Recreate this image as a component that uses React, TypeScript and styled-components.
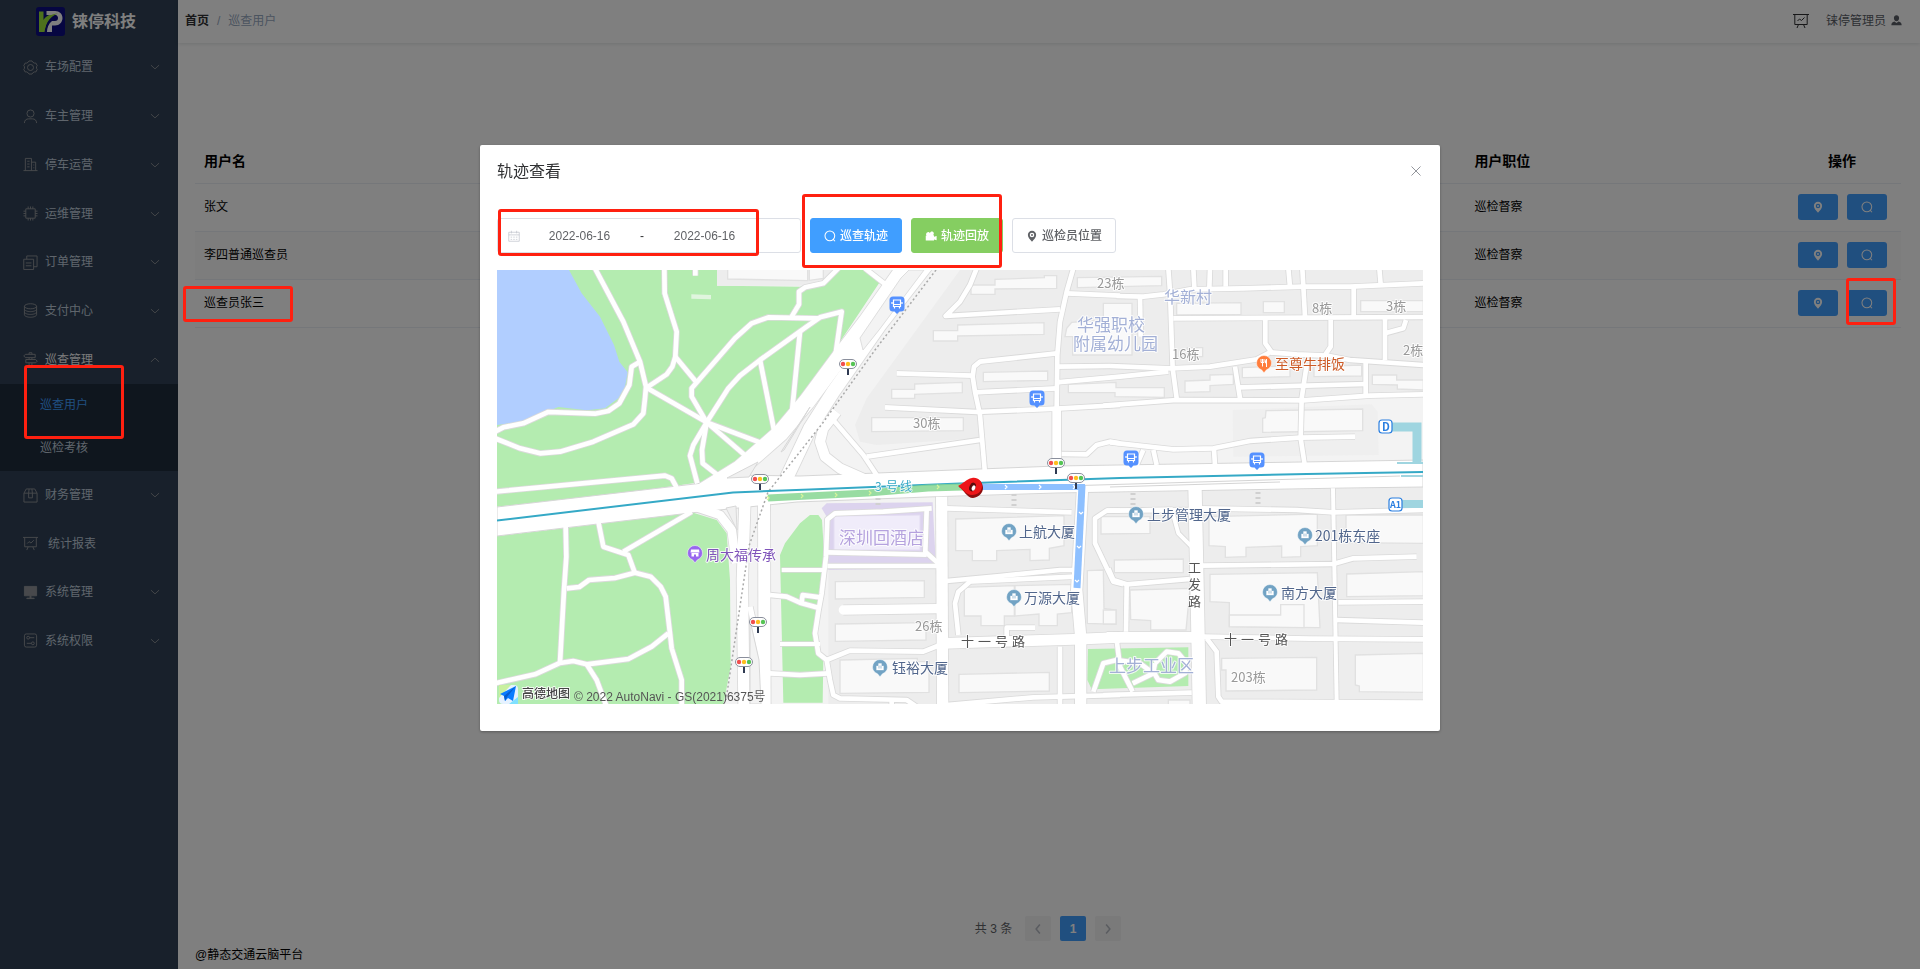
import React from 'react';
import styled, { createGlobalStyle } from 'styled-components';

const GlobalStyle = createGlobalStyle`
  *, *::before, *::after { box-sizing: border-box; }
  body {
    margin: 0;
    background: #ffffff;
    color: #000000;
    font-family: "Liberation Sans", "Noto Sans CJK SC", sans-serif;
    font-size: 12px;
    line-height: 18px;
  }
  button, input { font: inherit; }
  a { color: inherit; text-decoration: none; }
`;

/* ---------- icons ---------- */

const ICONS: Record<string, React.ReactNode> = {
  gear: (
    <>
      <path d="M5.6 2.3 6.4 1h3.2l.8 1.3 1.7 1 1.5-.1 1.6 2.8-.8 1.2v1.6l.8 1.2-1.6 2.8-1.5-.1-1.7 1L9.600 15H6.400l-.8-1.300-1.700-1-1.500.1L.8 10l.8-1.200V7.200L.8 6l1.600-2.800 1.500.1z" />
      <circle cx="8" cy="8" r="3.200" />
    </>
  ),
  user: (
    <>
      <circle cx="8" cy="4.800" r="3.800" />
      <path d="M1.500 15c0-3 2-4.500 4.500-4.500h4c2.500 0 4.500 1.500 4.500 4.500" />
    </>
  ),
  building: <path d="M2.500 14.500v-13h6.500v13M9 5.500h4.500v9M.5 14.500h15M4.500 4.500h2.500M4.500 7.500h2.500M4.500 10.500h2.500M11 8.500h1M11 11.500h1" />,
  chip: <path d="M3 3h10v10H3zM5.500 3V.5M8 3V.5M10.500 3V.5M5.500 15.500V13M8 15.500V13M10.500 15.500V13M3 5.500H.5M3 8H.5M3 10.500H.5M15.500 5.500H13M15.500 8H13M15.500 10.500H13" />,
  docs: <path d="M.8 4.500h10.500v11H.8zM4 4.500V1h11v11.500h-3.500M3 8.500h6M3 11.500h6" />,
  coins: (
    <>
      <ellipse cx="8" cy="3.500" rx="6.500" ry="2.700" />
      <path d="M1.500 3.500v9c0 1.500 3 2.700 6.500 2.700s6.500-1.200 6.500-2.700v-9M1.500 6.500C1.500 8 4.500 9.200 8 9.200s6.500-1.200 6.500-2.700M1.500 9.500c0 1.500 3 2.700 6.500 2.700s6.500-1.200 6.500-2.700" />
    </>
  ),
  signpost: <path d="M6.500 2.500V.8h3v1.700M2.500 2.500h10.500v3.500H2.500L.8 4.200zM3 8h10.500l1.700 1.800-1.700 1.700H3zM6.500 6v2M9.500 6v2M6.500 11.500v3M9.500 11.500v3M4 15h8" />,
  suitcase: <path d="M1 5.500h14v9.500H1zM1 5.500 3.500 1h9L15 5.500M6 5.500v5h4v-5M6.500 1 6 5.500M9.500 1l.5 4.500" />,
  board: <path d="M0 1.500h16M1.800 1.500v10h12.400v-10M5.500 11.500 4 15M10.500 11.500 12 15M4.500 8l2-2 2 1.500 3-3" />,
  monitor: <path fill="currentColor" d="M1.500 1.500h13v10h-13zM7.500 11.500h1v2.500h-1zM4 14h8v.5H4z" />,
  sliders: (
    <>
      <rect x="1.500" y="1" width="13" height="14" rx="2" />
      <circle cx="5.500" cy="5" r="1.500" />
      <circle cx="10.500" cy="11" r="1.500" />
      <path d="M7 5h5M4 11h5" />
    </>
  ),
  down: <path d="m1.500 5 6.500 6 6.500-6" />,
  up: <path d="m1.500 11 6.500-6 6.500 6" />,
  left: <path d="m10.500 2-5 6 5 6" />,
  right: <path d="m5.500 2 5 6-5 6" />,
  close: <path d="m2 2 12 12M14 2 2 14" />,
  search: (
    <>
      <circle cx="7.800" cy="7.800" r="6.500" />
      <path d="m12 12.200 2.700 2.800" />
    </>
  ),
  calendar: <path d="M1 3h14v12H1zM1 6.500h14M4.500 1v3.500M11.500 1v3.500M3.500 9.500h2M7 9.500h2M10.500 9.500h2M3.500 12.500h2M7 12.500h2M10.500 12.500h2" />,
  pin: <path fill="currentColor" stroke="none" fillRule="evenodd" d="M8 1a5.500 5.500 0 0 0-5.500 5.500c0 3.200 2.800 6 5.500 9 2.700-3 5.500-5.800 5.500-9A5.500 5.500 0 0 0 8 1zm0 2.500a3 3 0 1 1 0 6 3 3 0 0 1 0-6zm0 1.800a1.300 1.300 0 1 0 0 2.600 1.300 1.300 0 0 0 0-2.600z" />,
  camera: <path fill="currentColor" stroke="none" d="M3.500 3a2.300 2.300 0 0 1 3 1.200C7 2.200 8.500 1.500 10 2c2.300.8 2.300 3.800.7 5H12v2l3.500-1v5.500L12 12.500V14H1V7.500h1C.8 6 1.500 3.500 3.500 3z" />,
  person: <path fill="currentColor" stroke="none" d="M8 .5c2.300 0 3.800 1.700 3.800 4S10.300 9.200 8 9.200 4.200 6.800 4.200 4.500 5.700.5 8 .5zM5 9.500l3 2 3-2c3 .6 4.500 2.200 4.500 5.500H.5C.500 11.700 2 10.100 5 9.500z" />,
};

const Svg = styled.svg`
  flex: none;
  display: block;
  fill: none;
  stroke: currentColor;
`;

const Icon = ({ name, size = 12, weight = 1 }: { name: string; size?: number; weight?: number }) => (
  <Svg width={size} height={size} viewBox="0 0 16 16" strokeWidth={weight} aria-hidden="true">
    {ICONS[name]}
  </Svg>
);

/* ---------- page shell ---------- */

const Page = styled.div`
  position: relative;
  display: flex;
  min-height: 100vh;
`;

const Sidebar = styled.aside`
  flex: none;
  width: 178px;
  background: #304156;
  color: #bfcbd9;
`;

const Brand = styled.div`
  display: flex;
  align-items: center;
  gap: 7px;
  height: 43px;
  padding-left: 36px;
  color: #ffffff;
  font-size: 16px;
  font-weight: 700;
`;

const MenuGroup = styled.div<{ $height: number }>`
  display: flex;
  flex-direction: column;
  min-height: ${(p) => p.$height}px;
`;

const MenuItem = styled.a<{ $wide?: boolean; $open?: boolean }>`
  flex: 1;
  display: flex;
  align-items: center;
  gap: ${(p) => (p.$wide ? 10 : 7)}px;
  padding: 0 18px 0 23px;
  color: ${(p) => (p.$open ? '#f4f4f5' : '#bfcbd9')};
  > svg { color: #909399; }
  > span { flex: 1; }
`;

const SubMenu = styled(MenuGroup)`
  background: #1f2d3d;
`;

const SubItem = styled.a<{ $active?: boolean }>`
  flex: 1;
  display: flex;
  align-items: center;
  padding: 0 0 2px 40px;
  color: ${(p) => (p.$active ? '#409eff' : '#bfcbd9')};
`;

const Main = styled.div`
  flex: 1;
  min-width: 0;
  display: flex;
  flex-direction: column;
`;

const TopBar = styled.header`
  display: flex;
  align-items: center;
  justify-content: space-between;
  height: 43px;
  padding: 0 18px 2px 7px;
  box-shadow: 0 1px 4px rgba(0, 21, 41, 0.12);
`;

const Breadcrumb = styled.nav`
  display: flex;
  gap: 8px;
  color: #97a8be;
  a { color: #303133; font-weight: 700; }
`;

const TopTools = styled.div`
  display: flex;
  align-items: center;
  gap: 17px;
  color: #303133;
`;

const UserName = styled.a`
  display: flex;
  align-items: center;
  gap: 5px;
  color: #5a5e66;
`;

const Content = styled.main`
  flex: 1;
  display: flex;
  flex-direction: column;
  padding: 92px 19px 5px 17px;
`;

const Table = styled.table`
  width: 100%;
  table-layout: fixed;
  border-collapse: collapse;
  th, td {
    height: 48px;
    padding: 0 9px;
    text-align: left;
    border-bottom: 1px solid #ebeef5;
  }
  th { padding-top: 5px; font-size: 14px; font-weight: 700; }
  th:last-child { text-align: center; }
  td:last-child { padding: 0; }
  tbody tr:nth-child(2) { background: #fafafa; }
`;

const ActionCol = styled.col`
  width: 118px;
`;

const Actions = styled.div`
  display: flex;
  justify-content: center;
  gap: 9px;
`;

const ActionButton = styled.button`
  display: grid;
  place-items: center;
  width: 40px;
  height: 26px;
  padding: 0;
  border: 0;
  border-radius: 3px;
  background: #409eff;
  color: #ffffff;
`;

const Pager = styled.nav`
  display: flex;
  justify-content: center;
  align-items: center;
  gap: 9px;
  margin-top: auto;
  color: #606266;
  > span { padding-right: 4px; }
`;

const PageButton = styled.button<{ $active?: boolean }>`
  display: grid;
  place-items: center;
  width: 26px;
  height: 25px;
  padding: 0;
  border: 0;
  border-radius: 2px;
  font-weight: 700;
  background: ${(p) => (p.$active ? '#409eff' : '#f4f4f5')};
  color: ${(p) => (p.$active ? '#ffffff' : '#b4b8c0')};
`;

const Footer = styled.footer`
  padding-top: 5px;
`;

/* ---------- dialog ---------- */

const Overlay = styled.div`
  position: fixed;
  inset: 0;
  z-index: 10;
  padding-top: 145px;
  background: rgba(0, 0, 0, 0.5);
`;

const Dialog = styled.section`
  position: relative;
  width: 50%;
  margin: 0 auto;
  padding: 0 17px 27px;
  border-radius: 2px;
  background: #ffffff;
  box-shadow: 0 1px 3px rgba(0, 0, 0, 0.3);
`;

const DialogHead = styled.header`
  display: flex;
  align-items: center;
  justify-content: space-between;
  height: 73px;
  padding-bottom: 20px;
  h2 { margin: 0; font-size: 16px; font-weight: 400; color: #303133; }
`;

const CloseButton = styled.button`
  padding: 0 1px 2px 0;
  border: 0;
  background: none;
  color: #909399;
`;

const Toolbar = styled.div`
  display: flex;
  gap: 9px;
  margin-bottom: 17px;
`;

const DateRange = styled.div`
  display: flex;
  align-items: center;
  width: 304px;
  height: 35px;
  padding-left: 10px;
  border: 1px solid #dcdfe6;
  border-radius: 3px;
  color: #c0c4cc;
  > svg { margin-right: 3px; }
  > span { width: 12px; text-align: center; color: #303133; }
`;

const DateInput = styled.input`
  width: 113px;
  padding: 0;
  border: 0;
  outline: 0;
  background: none;
  color: #606266;
  text-align: center;
`;

const TONES = {
  primary: ['#409eff', '#409eff', '#ffffff'],
  success: ['#85ce61', '#85ce61', '#ffffff'],
  plain: ['#ffffff', '#dcdfe6', '#606266'],
};

const ToolButton = styled.button<{ $tone: keyof typeof TONES }>`
  display: flex;
  align-items: center;
  gap: 4px;
  height: 35px;
  padding: 0 13px;
  border-radius: 3px;
  background: ${(p) => TONES[p.$tone][0]};
  border: 1px solid ${(p) => TONES[p.$tone][1]};
  color: ${(p) => TONES[p.$tone][2]};
  font-weight: 500;
`;

const Mark = styled.div<{ $top: number; $left?: number; $right?: number; $w: number; $h: number }>`
  position: absolute;
  z-index: 20;
  top: ${(p) => p.$top}px;
  ${(p) => (p.$right === undefined ? `left: ${p.$left}px;` : `right: ${p.$right}px;`)}
  width: ${(p) => p.$w}px;
  height: ${(p) => p.$h}px;
  border: 3px solid #ff2010;
  border-radius: 3px;
  pointer-events: none;
`;

/* ---------- map ---------- */

const MapSvg = styled.svg`
  display: block;
  width: 100%;
  height: 434px;
  background: #f3f3f3;
  text { font-family: "Noto Sans CJK SC", sans-serif; }
  .credit { font-family: "Liberation Sans", "Noto Sans CJK SC", sans-serif; }
`;

type Shape = [points: string, fill?: string];
type Road = [points: string, width?: number];
interface Tile {
  x: number;
  y: number;
  areas: Shape[];
  buildings: string[];
  roads: Road[];
}

const BLOCK = '#ededed';
const GREEN = '#b4ecb0';

/* Six tiles, each drawn at three units to the pixel. */
const TILES: Tile[] = [
  {
    x: -7, y: -5,
    areas: [
      ['21,15 681,15 681,62 930,65 1010,50 1040,15 1120,15 1170,50 1040,245 1020,290 930,405 850,515 770,580 640,650 350,692 21,725', GREEN],
      ['21,15 237,15 275,85 330,155 372,240 388,290 413,322 405,365 385,400 345,430 290,436 205,426 175,438 100,470 21,480', '#b1ceff'],
      ['681,15 1030,15 1000,45 930,62 681,62', BLOCK],
      ['604,88 663,90 663,103 604,101', '#e0f5de'],
    ],
    buildings: ['713,0 953,0 953,47 713,42', '958,10 1000,10 1000,40 958,46'],
    roads: [
      ['315,10 400,170 450,290 468,365 465,400 460,445 430,478 310,530 210,560 150,565 90,550 15,520'],
      ['450,290 425,305 418,360 388,415 355,438 315,446 175,441 100,475 40,487 15,500'],
      ['523,10 524,85 560,200 556,275 547,305 530,328 470,368'],
      ['556,275 618,350'],
      ['470,368 650,472 830,540'],
      ['650,472 770,575'],
      ['650,472 605,395 605,370 735,220 785,175 835,157 985,160'],
      ['650,472 715,370 750,332 810,285 950,185 990,157 1055,140 1035,280 1015,310'],
      ['905,155 927,118 927,80 945,67 1000,55 1045,10'],
      ['930,200 905,450'],
      ['810,285 855,510'],
      ['650,472 610,540 600,572 622,655'],
      ['650,472 636,555 638,595 680,628'],
      ['15,680 525,632 545,640 560,668'],
      ['616,10 616,32'],
    ],
  },
  {
    x: 303, y: -5,
    areas: [
      ['480,15 960,15 960,420 780,430 540,440 540,520 230,540 180,530 165,480 200,400', BLOCK],
    ],
    buildings: [
      '513,60 585,60 585,43 733,38 733,32 770,32 770,70 585,72 585,88 513,88',
      '400,197 473,197 473,180 732,173 732,208 473,213 473,228 400,228',
      '550,322 743,318 743,346 550,350',
      '275,373 344,373 344,357 487,352 487,383 344,388 344,400 275,400',
      '215,458 490,458 490,497 215,500',
      '832,38 1085,34 1085,62 832,68',
      '910,115 996,115 996,270 818,270 818,215 795,215 800,190 815,172 910,165',
      '805,358 948,352 948,368 1093,368 1093,397 945,395 945,383 805,383',
    ],
    roads: [
      ['530,10 510,60 480,110 437,153 780,133'],
      ['820,10 800,80 780,170 772,270 770,430'],
      ['770,430 770,620', 26],
      ['800,85 960,92'],
      ['770,265 540,290 522,305 518,335 525,380 540,450 555,625'],
      ['290,325 518,332'],
      ['525,382 770,370'],
      ['255,427 530,441 770,431 960,420'],
      ['770,305 930,303'],
      ['770,352 960,335 1105,320'],
      ['200,575 540,525'],
      ['100,465 190,570 230,630'],
      ['110,440 70,490 60,530 75,575 120,610 200,645', 30],
      ['785,567 860,568 890,540 930,530 960,535'],
      ['195,10 265,65'],
      ['-310,690 -180,610 -60,505 20,410 120,275 200,170 320,0', 50],
      ['-60,680 30,490 100,380 240,180 380,0', 40],
      ['145,290 165,240', 46],
    ],
  },
  {
    x: 613, y: -5,
    areas: [
      ['0,15 940,15 940,390 200,408 0,420', BLOCK],
      ['368,435 785,418 803,440 806,570 370,575', '#efefef'],
    ],
    buildings: [
      '200,115 393,113 393,148 200,150',
      '460,110 523,110 523,143 460,143',
      '752,107 940,107 940,140 752,140',
      '225,348 300,345 300,330 370,328 370,358 300,362 300,380 225,382',
      '397,308 540,302 540,335 397,338',
      '612,305 755,300 755,333 612,335',
      '787,330 860,330 860,345 940,345 940,375 862,372 862,360 787,358',
      '468,437 758,432 758,497 458,502 458,460 466,458',
      '232,248 278,248 278,275 232,275',
    ],
    roads: [
      ['175,10 180,80 188,310 200,400'],
      ['20,93 100,95 160,88 240,73 400,70 580,65 720,65 940,55'],
      ['250,10 253,68'], ['300,10 298,70'], ['347,10 347,65'],
      ['535,10 540,65'], ['577,10 585,155'], ['808,10 812,58'], ['731,65 731,155'],
      ['190,160 940,156'],
      ['90,95 92,215'],
      ['0,303 180,310 300,305 440,283 480,262 560,268 650,272 720,285 940,300'],
      ['466,165 466,235 485,262'], ['662,165 662,245 645,270'],
      ['825,160 825,285'], ['825,205 880,190 888,165'],
      ['375,305 390,400'],
      ['590,300 575,400 572,520 585,605'],
      ['767,290 767,390'],
      ['390,367 770,357'],
      ['-20,422 200,405 580,406 780,392 940,388'],
      ['0,532 190,553 310,550 420,528 570,518 735,515'],
      ['130,555 140,600'], ['100,555 80,600'], ['312,555 315,600'],
    ],
  },
  {
    x: -7, y: 210,
    areas: [
      ['21,168 230,143 570,100 600,95 680,120 710,160 720,300 722,560 700,675 21,675', GREEN],
      ['170,115 280,98 280,104 200,114', GREEN],
    ],
    buildings: [],
    roads: [
      ['227,140 229,230 222,330 210,548'],
      ['325,125 340,200 415,225 435,280'],
      ['605,95 400,215'],
      ['230,325 268,321 297,300 375,294 435,278 482,290 512,320 527,350 540,460 545,505 575,600 575,680'],
      ['535,460 485,500 415,537 290,553 250,543 210,549 135,583 15,610'],
      ['290,553 320,600 350,680'],
      ['600,75 690,105 725,150 738,250', 26],
      ['765,60 757,300 762,680', 34],
      ['822,60 824,680', 36],
      ['780,380 820,560', 16],
    ],
  },
  {
    x: 303, y: 210,
    areas: [
      ['-60,225 -45,190 0,130 30,105 55,105 66,120 75,265 55,380 45,470 70,540 68,668 -50,668', GREEN],
      ['85,270 410,262 410,675 85,675', BLOCK],
      ['65,85 80,70 398,67 408,265 85,270 80,110', '#dcd3ee'],
      ['445,52 960,35 960,675 445,675', BLOCK],
    ],
    buildings: [
      '467,117 792,107 792,197 748,205 748,240 690,242 690,208 590,212 590,242 517,242 517,212 467,212',
      '493,322 643,317 643,408 613,408 613,437 543,437 543,408 493,408',
      '645,317 815,313 815,398 772,402 772,437 717,437 717,402 645,408',
      '477,583 748,577 748,633 477,638',
      '106,305 373,302 373,352 106,357',
      '106,432 378,428 378,480 106,484',
      '120,540 352,535 352,545 387,545 387,637 120,640',
      '903,110 1050,110 1050,160 903,162',
      '862,272 910,270 912,385 948,390 948,433 862,430',
      '943,240 1150,237 1150,278 943,278',
    ],
    roads: [
      ['395,85 250,95 105,100 82,118 78,230 65,340 55,395 45,460 55,520 80,540 90,600 100,645 120,655 320,660 350,680'],
      ['380,90 376,215 420,255'], ['82,217 380,224'], ['82,258 420,258'],
      ['-55,270 75,270', 12], ['-90,345 -40,350 0,368 60,385'], ['5,365 8,345 60,352'],
      ['-60,492 60,492', 12], ['-90,580 0,585 85,580'],
      ['130,390 410,386', 28],
      ['80,540 150,512 370,515 420,495'],
      ['440,85 815,97'],
      ['440,303 600,288 780,270 825,270'], ['500,305 825,290'],
      ['510,305 475,335 465,370 475,465'],
      ['620,475 620,443 705,443'],
      ['780,500 780,680'], ['440,675 700,652 960,645'], ['275,655 275,680'],
      ['960,92 920,92 885,115 885,190 940,305 970,313'],
      ['425,50 428,680', 34],
      ['848,20 830,330 842,470 842,680', 34],
      ['430,490 820,478 960,472', 32],
    ],
  },
  {
    x: 613, y: 210,
    areas: [
      ['0,38 940,22 940,675 0,675', BLOCK],
      ['-66,507 235,502 235,618 -55,628 -68,600', GREEN],
    ],
    buildings: [
      '60,330 240,325 228,450 122,450 122,422 62,418',
      '-20,390 18,390 18,432 -20,432',
      '297,110 622,102 622,197 572,200 572,230 515,232 515,198 408,202 408,230 346,232 346,200 297,197',
      '708,105 940,105 940,190 708,188',
      '300,283 622,278 630,443 358,440 358,368 300,365',
      '358,405 512,405 512,374 582,374 582,443 358,440',
      '710,282 940,275 940,347 710,350',
      '335,535 620,532 620,630 348,633 348,570 335,570',
      '736,525 940,520 940,637 748,635 748,618 736,615',
      '175,660 240,660 240,680 175,680',
    ],
    roads: [
      ['0,92 185,88 205,160 245,200', 12],
      ['-10,92 240,90'],
      ['275,85 560,90 670,97 940,90'],
      ['-5,265 10,300 50,313 240,297'],
      ['50,318 48,455'],
      ['275,257 670,252 730,235 920,230'],
      ['685,367 940,365'], ['680,420 940,428'],
      ['290,475 320,515 325,650 335,665 940,668'],
      ['-50,635 -20,550 20,540'], ['20,480 30,560 68,635'], ['68,610 130,580 90,550 20,540'],
      ['135,550 170,515 205,520 230,550 225,580 180,605 145,600 130,575 135,550'],
      ['-20,645 245,638'],
      ['669,25 680,665', 12],
      ['280,470 600,476 940,478'],
      ['-10,472 260,472', 32],
      ['255,25 262,360 268,680', 40],
    ],
  },
];

const LIGHTS = [[263, 209], [351, 94], [559, 193], [579, 208], [261, 352], [247, 392]];
const BUSES = [[400, 34], [540, 128], [634, 188], [760, 190]];
const TOWERS = [[512, 261], [517, 327], [383, 397], [639, 244], [808, 265], [773, 322]];

type LabelSpec = [text: string, x: number, y: number, size: number, color: string];
const NAVY = '#51668c';
const GREY = '#999999';
const LILAC = '#a3b0d6';
const LABELS: LabelSpec[] = [
  ['周大福传承', 209, 290, 14, '#7f53ba'],
  ['上航大厦', 522, 267, 14, NAVY],
  ['万源大厦', 527, 333, 14, NAVY],
  ['钰裕大厦', 395, 403, 14, NAVY],
  ['上步管理大厦', 650, 250, 14, NAVY],
  ['201栋东座', 818, 271, 14, NAVY],
  ['南方大厦', 784, 328, 14, NAVY],
  ['至尊牛排饭', 778, 99, 14, '#cc5a26'],
  ['30栋', 416, 158, 13, GREY],
  ['26栋', 418, 361, 13, GREY],
  ['23栋', 600, 18, 13, GREY],
  ['16栋', 675, 89, 13, GREY],
  ['8栋', 815, 43, 13, GREY],
  ['3栋', 889, 41, 13, GREY],
  ['2栋', 906, 85, 13, GREY],
  ['203栋', 734, 412, 13, GREY],
  ['华新村', 667, 33, 16, LILAC],
  ['深圳回酒店', 342, 274, 17, '#b5a2de'],
  ['上步工业区', 612, 402, 17, LILAC],
];

/* Street names run along the road, one character at a time. */
const STREETS: LabelSpec[] = [
  ['十', 464, 376, 13, '#555555'], ['一', 481, 376, 13, '#555555'], ['号', 498, 376, 13, '#555555'], ['路', 515, 376, 13, '#555555'],
  ['十', 727, 374, 13, '#555555'], ['一', 744, 374, 13, '#555555'], ['号', 761, 374, 13, '#555555'], ['路', 778, 374, 13, '#555555'],
  ['工', 691, 302, 13, '#555555'], ['发', 691, 319, 13, '#555555'], ['路', 691, 336, 13, '#555555'],
  ['3', 378, 221, 12, '#35a9c6'], ['号', 389, 221, 12, '#35a9c6'], ['线', 403, 221, 12, '#35a9c6'],
];

const Label = ({ spec: [text, x, y, size, color] }: { spec: LabelSpec }) => (
  <text x={x} y={y} fontSize={size} fill={color} stroke="#ffffff" strokeWidth="2" strokeOpacity="0.8" paintOrder="stroke" strokeLinejoin="round">
    {text}
  </text>
);

const eachTile = (draw: (tile: Tile) => React.ReactNode) =>
  TILES.map((tile) => (
    <g key={`${tile.x},${tile.y}`} transform={`translate(${tile.x} ${tile.y}) scale(0.33333)`}>
      {draw(tile)}
    </g>
  ));

const PlacePin = ({ x, y, color, children }: { x: number; y: number; color: string; children: React.ReactNode }) => (
  <g transform={`translate(${x} ${y})`}>
    <path d="M-7.500 0a7.500 7.500 0 1 1 15 0c0 3.500-2.500 5.800-5 6.800L0 9.800l-2.500-3C-5 5.800-7.500 3.500-7.500 0z" fill={color} stroke="#ffffff" strokeWidth="0.500" />
    {children}
  </g>
);

const StreetMap = () => (
  <MapSvg viewBox="0 0 926 434" preserveAspectRatio="xMidYMid slice" role="img" aria-label="巡查轨迹地图">
    {eachTile((t) => t.areas.map(([points, fill]) => <polygon key={points} points={points} fill={fill} />))}
    <polygon points="337,246 423,245 423,280 337,280" fill="#f0ecfa" stroke="#e3dcf2" />
    {eachTile((t) => t.buildings.map((points) => (
      <polygon key={points} points={points} fill="#f9f9f9" stroke="#e1e1e1" strokeWidth="4" />
    )))}
    {eachTile((t) => t.roads.map(([points, w = 14]) => (
      <polyline key={points} points={points} fill="none" stroke="#dadada" strokeWidth={w + 5} strokeLinejoin="round" />
    )))}
    <polygon points="0,237 206,213 233,205 303,206 560,196 926,190 926,217 850,218 560,223 430,227 300,232 193,243 0,266" fill="#ffffff" stroke="#d6d6d6" />
    {eachTile((t) => t.roads.map(([points, w = 14]) => (
      <polyline key={points} points={points} fill="none" stroke="#ffffff" strokeWidth={w} strokeLinejoin="round" strokeLinecap={w === 28 ? 'round' : 'butt'} />
    )))}

    <polygon points="230,208 261,192 252,207" fill="#f0f0f0" stroke="#d8d8d8" />
    <polygon points="284,182 313,137 298,162 287,180" fill="#f0f0f0" stroke="#d8d8d8" />
    <polygon points="363,68 404,8 412,0 427,0 382,60 366,80" fill="#f3f3f3" stroke="#dedede" />
    <polygon points="229,238 239,236 240,260" fill="#f0f0f0" stroke="#d8d8d8" />
    <polygon points="253,350 262,390 264,434 253,434" fill="#f3f3f3" stroke="#d8d8d8" />
    <path d="M500 218 903 206M613 217l170-5" fill="none" stroke="#d4d4d4" />
    <path d="M439 0 378 80 325 154 271 222 252 276 229 430" fill="none" stroke="#a9a9a9" strokeWidth="1.500" strokeDasharray="2 2.500" />

    <g fill="none" stroke="#d0d0d0" strokeWidth="5" strokeDasharray="2 3">
      <path d="M381 228v10M517 224v14M636 223v14M761 222v14" />
    </g>

    <path d="M895 157h25v37" fill="none" stroke="#9fd5e0" strokeWidth="9" />
    <path d="M900 193h26M904 206h22" fill="none" stroke="#9fd5e0" strokeWidth="2" />
    <path d="M904 234h22" fill="none" stroke="#9fd5e0" strokeWidth="8" />

    <path d="M0 250.500 236 222.500 313 219.500 463 213.500 623 208 810 204 926 202" fill="none" stroke="#35a9c6" strokeWidth="2" />
    <path d="M271 228l40-2 60-3 60-5 35-1" fill="none" stroke="#86d692" strokeOpacity="0.850" strokeWidth="7" />
    <path d="M466 217H588" fill="none" stroke="#8ec0ff" strokeWidth="6" />
    <path d="M585 215 580 318" fill="none" stroke="#8ec0ff" strokeWidth="7" />
    <g fill="none" stroke="#d7f59a" strokeWidth="1.200">
      <path d="m270 226 2 2-2 2M304 224l2 2-2 2M338 223l2 2-2 2M372 221l2 2-2 2M406 218l2 2-2 2M440 215l2 2-2 2" />
      <path stroke="#ffffff" d="m508 215 2 2-2 2M542 215l2 2-2 2M576 215l2 2-2 2M582 242l2 2 2-2M580 276l2 2 2-2M578 310l2 2 2-2" />
    </g>

    {STREETS.map((spec) => <Label key={spec.join()} spec={spec} />)}
    {LABELS.map((spec) => <Label key={spec.join()} spec={spec} />)}
    <text fontSize="17" fill={LILAC} stroke="#ffffff" strokeWidth="2" strokeOpacity="0.8" paintOrder="stroke" strokeLinejoin="round">
      <tspan x="580" y="61">华强职校</tspan>
      <tspan x="576" y="80">附属幼儿园</tspan>
    </text>

    {LIGHTS.map(([x, y]) => (
      <g key={`${x},${y}`} transform={`translate(${x} ${y})`}>
        <path d="M0 4v7" stroke="#2f3a52" strokeWidth="2" />
        <rect x="-8.500" y="-4.500" width="17" height="9" rx="4.500" fill="#ffffff" stroke="#8a8f9c" />
        <circle cx="-5" r="2.200" fill="#f04f4f" /><circle r="2.200" fill="#ffbf1f" /><circle cx="5" r="2.200" fill="#55c455" />
      </g>
    ))}
    {BUSES.map(([x, y]) => (
      <g key={`${x},${y}`} transform={`translate(${x} ${y})`}>
        <path d="M-4-7.500h8q3.500 0 3.500 3.500v8q0 3.500-3.500 3.500H2.500L0 10l-2.500-2.500H-4q-3.500 0-3.500-3.500v-8q0-3.500 3.500-3.500z" fill="#5591ff" />
        <path d="M-3.500-4h7v6.500h-7zM-3.500.5h7M-5-2v2M5-2v2M-2.500 2.500v2M2.500 2.500v2" fill="none" stroke="#ffffff" strokeWidth="1.200" />
      </g>
    ))}
    {TOWERS.map(([x, y]) => (
      <PlacePin key={`${x},${y}`} x={x} y={y} color="#72a3c4">
        <path d="M-4 3.500v-5h2V-4h4v2.500h2v5zM-1-1.500v3M1-1.500v3" fill="#ffffff" stroke="#72a3c4" strokeWidth="0.700" />
      </PlacePin>
    ))}
    <PlacePin x={198} y={283} color="#9867ee">
      <path d="M-4-3.500h8l.5 3h-9zM-3.500 0h7v3.500h-7zM-1 1.500h2v2h-2z" fill="#ffffff" fillRule="evenodd" />
    </PlacePin>
    <PlacePin x={767} y={93} color="#ff7d3c">
      <path d="M-3-4v3.500M-1.500-4v7.500M0-4v3.500h-3M2.500 4v-8q-1.500 2-1 4h1" fill="none" stroke="#ffffff" />
    </PlacePin>

    <g fill="#ffffff" stroke="#2a7fe0" strokeWidth="1.200">
      <rect x="882" y="150" width="13" height="13" rx="3" />
      <rect x="892" y="228" width="13" height="13" rx="3" />
    </g>
    <text x="885" y="161" fontSize="11" fontWeight="700" fill="#2a7fe0">D</text>
    <text x="893" y="238" fontSize="9" fontWeight="700" fill="#2a7fe0">A1</text>

    <path d="M462 217c4-2 7-7 13-8 7-1 11 4 11 9s-4 9-10 10c-6 0-9-8-14-11z" fill="#8d0d0d" />
    <path d="M461 216c5-2 8-7 14-8 6-1 10 3 10 8s-4 9-10 9c-6 0-9-6-14-9z" fill="#ed1518" />
    <ellipse cx="475.500" cy="217" rx="3" ry="4.500" transform="rotate(25 475.500 217)" fill="#5a0b0b" />
    <ellipse cx="476.500" cy="218" rx="1.800" ry="2.800" transform="rotate(25 476.500 218)" fill="#ffffff" />

    <rect x="2" y="415" width="19" height="19" rx="4" fill="#e6f2ff" />
    <path d="M2 415h12L2 428z" fill="#c9f0a0" /><path d="M12 434h9v-7z" fill="#7fe0ff" />
    <path d="M3 424 19 416l-3 15-5-3-3 3-1-5z" fill="#0a7cff" /><path d="m19 416-12 10 1 5 2-4z" fill="#075dcc" />
    <text x="25" y="428" fontSize="12" fontWeight="500" fill="#444444" stroke="#ffffff" strokeWidth="1.500" paintOrder="stroke">高德地图</text>
    <text className="credit" x="77" y="431" fontSize="12" fill="#555555">© 2022 AutoNavi - GS(2021)6375号</text>
  </MapSvg>
);

/* ---------- content ---------- */

const MENU_TOP = [
  ['gear', '车场配置'], ['user', '车主管理'], ['building', '停车运营'], ['chip', '运维管理'],
  ['docs', '订单管理'], ['coins', '支付中心'], ['signpost', '巡查管理'],
];
const MENU_BOTTOM = [['suitcase', '财务管理'], ['board', '统计报表'], ['monitor', '系统管理'], ['sliders', '系统权限']];
const USERS = ['张文', '李四普通巡查员', '巡查员张三'];

const Entry = ({ icon, label }: { icon: string; label: string }) => {
  const open = icon === 'signpost';
  const leaf = icon === 'board';
  return (
    <MenuItem href="#" $wide={leaf} $open={open}>
      <Icon name={icon} size={15} />
      <span>{label}</span>
      {!leaf && <Icon name={open ? 'up' : 'down'} size={10} weight={1.4} />}
    </MenuItem>
  );
};

export default function App() {
  return (
    <Page>
      <GlobalStyle />
      <Sidebar>
        <Brand>
          <svg width="29" height="29" viewBox="0 0 29 29" aria-hidden="true">
            <rect width="29" height="29" rx="3" fill="#0c0c82" />
            <path d="M3 4.500h4.500V13C10 9 14 6.500 22 6.500c-7 2.500-12 7-13.500 18.500H3z" fill="#9be23b" />
            <path d="M10.500 4H19c4.500 0 7.500 3 7.500 7s-3 7.500-7.500 7.500h-3V25h-5c0-4 1.500-8.500 5-11h3c2 0 3-1.300 3-3 0-1.500-.8-2.500-2-3H10.500z" fill="#ffffff" />
            <path d="M8 14.500C11 9.500 15 7 22 6.500c-7 2.500-12 7-13.500 18.500z" fill="#9be23b" />
          </svg>
          铼停科技
        </Brand>
        <MenuGroup $height={341}>
          {MENU_TOP.map(([icon, label]) => <Entry key={label} icon={icon} label={label} />)}
        </MenuGroup>
        <SubMenu $height={87}>
          <SubItem href="#" $active>巡查用户</SubItem>
          <SubItem href="#">巡检考核</SubItem>
        </SubMenu>
        <MenuGroup $height={194}>
          {MENU_BOTTOM.map(([icon, label]) => <Entry key={label} icon={icon} label={label} />)}
        </MenuGroup>
      </Sidebar>

      <Main>
        <TopBar>
          <Breadcrumb>
            <a href="#">首页</a>
            <span>/</span>
            <span>巡查用户</span>
          </Breadcrumb>
          <TopTools>
            <Icon name="board" size={16} weight={1} />
            <UserName href="#">铼停管理员 <Icon name="person" size={11} /></UserName>
          </TopTools>
        </TopBar>
        <Content>
          <Table>
            <colgroup>
              <col /><col /><col /><col /><col />
              <ActionCol />
            </colgroup>
            <thead>
              <tr>
                <th>用户名</th>
                <th /><th /><th />
                <th>用户职位</th>
                <th>操作</th>
              </tr>
            </thead>
            <tbody>
              {USERS.map((name) => (
                <tr key={name}>
                  <td>{name}</td>
                  <td /><td /><td />
                  <td>巡检督察</td>
                  <td>
                    <Actions>
                      <ActionButton aria-label="位置"><Icon name="pin" /></ActionButton>
                      <ActionButton aria-label="轨迹"><Icon name="search" weight={1.4} /></ActionButton>
                    </Actions>
                  </td>
                </tr>
              ))}
            </tbody>
          </Table>
          <Pager>
            <span>共 3 条</span>
            <PageButton aria-label="上一页"><Icon name="left" weight={2} /></PageButton>
            <PageButton $active>1</PageButton>
            <PageButton aria-label="下一页"><Icon name="right" weight={2} /></PageButton>
          </Pager>
          <Footer>@静态交通云脑平台</Footer>
        </Content>
      </Main>

      <Overlay>
        <Dialog role="dialog" aria-label="轨迹查看">
          <DialogHead>
            <h2>轨迹查看</h2>
            <CloseButton aria-label="关闭"><Icon name="close" weight={1.3} /></CloseButton>
          </DialogHead>
          <Toolbar>
            <DateRange>
              <Icon name="calendar" />
              <DateInput aria-label="开始日期" defaultValue="2022-06-16" />
              <span>-</span>
              <DateInput aria-label="结束日期" defaultValue="2022-06-16" />
            </DateRange>
            <ToolButton $tone="primary"><Icon name="search" weight={1.4} />巡查轨迹</ToolButton>
            <ToolButton $tone="success"><Icon name="camera" />轨迹回放</ToolButton>
            <ToolButton $tone="plain"><Icon name="pin" />巡检员位置</ToolButton>
          </Toolbar>
          <StreetMap />
          <Mark $top={64} $left={18} $w={261} $h={47} />
          <Mark $top={49} $left={322} $w={200} $h={74} />
        </Dialog>
      </Overlay>

      <Mark $top={365} $left={24} $w={100} $h={74} />
      <Mark $top={286} $left={183} $w={110} $h={36} />
      <Mark $top={278} $right={24} $w={50} $h={47} />
    </Page>
  );
}
